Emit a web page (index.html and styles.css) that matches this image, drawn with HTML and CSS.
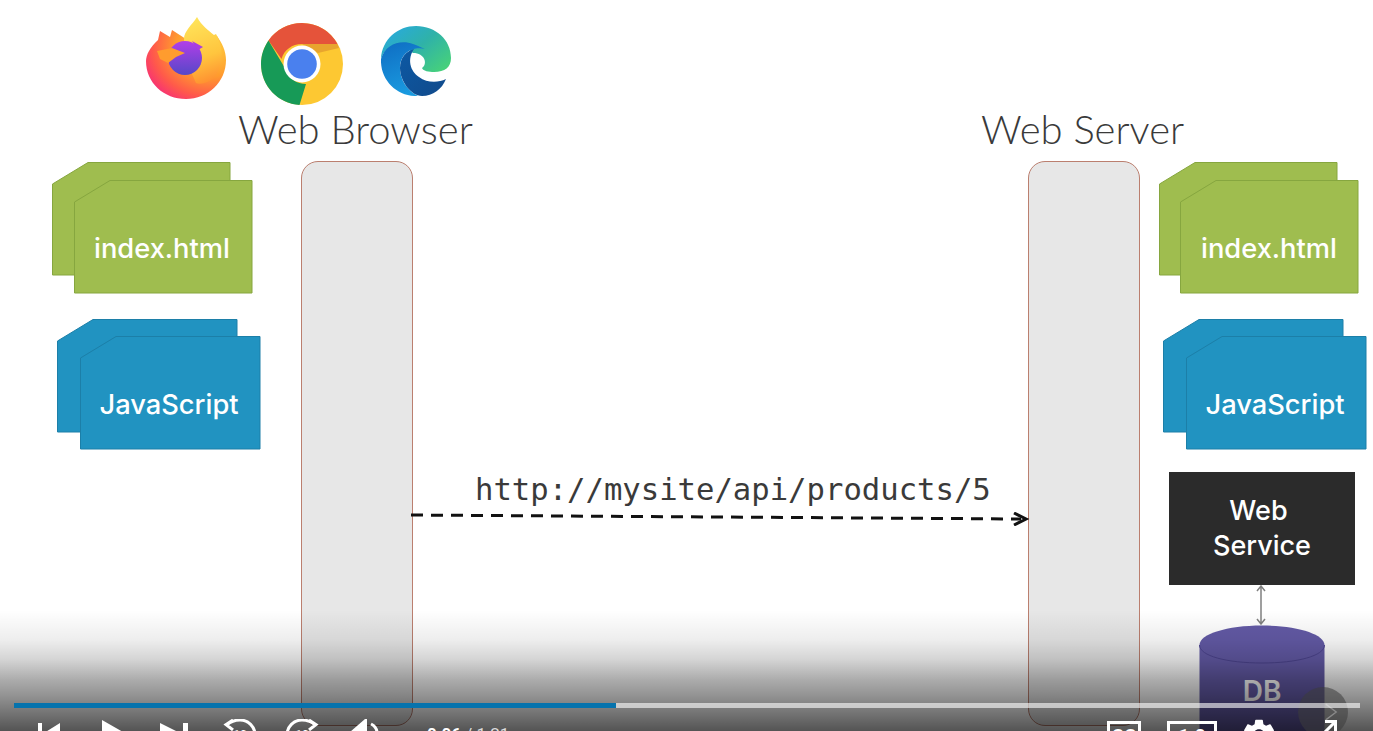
FILE: index.html
```html
<!DOCTYPE html>
<html lang="en">
<head>
    <meta charset="UTF-8">
    <meta name="viewport" content="width=device-width, initial-scale=1.0">
    <title>Web Browser and Web Server</title>
    <link rel="stylesheet" href="styles.css">
</head>
<body>
    <div class="player">
        <div class="slide">
            <!-- browser logos -->
            <svg class="logo logo-firefox" viewBox="0 0 80 82">
                <defs>
                    <radialGradient id="foxBody" cx="0.8" cy="0.25" r="0.95">
                        <stop offset="0" stop-color="#ffd23f"/>
                        <stop offset="0.45" stop-color="#ff9a2e"/>
                        <stop offset="0.75" stop-color="#ff5a4a"/>
                        <stop offset="1" stop-color="#f5277f"/>
                    </radialGradient>
                    <linearGradient id="foxFlame" x1="0.4" y1="0" x2="0.6" y2="1">
                        <stop offset="0" stop-color="#ffe45a"/>
                        <stop offset="0.6" stop-color="#ffc53e"/>
                        <stop offset="1" stop-color="#ff8f30"/>
                    </linearGradient>
                    <linearGradient id="foxGlobe" x1="0.5" y1="0" x2="0.5" y2="1">
                        <stop offset="0" stop-color="#b23ee8"/>
                        <stop offset="1" stop-color="#5648c8"/>
                    </linearGradient>
                </defs>
                <path fill="url(#foxBody)" d="M14 14 L12 23 C4 30 0 38 0 44 C0 66 18 82 40 82 C62 82 80 65 80 43 C80 34 76 26 71 19 L40 22 L26 13 L24 20 Z"/>
                <path fill="url(#foxFlame)" d="M51 0 C56 9 62 13 68 18 L70 17 C77 28 78 46 70 58 C64 66 54 68 50 66 L39 41 L38 22 C38 14 46 8 51 0 Z"/>
                <circle cx="39" cy="41" r="17" fill="url(#foxGlobe)"/>
                <path fill="#a83ee0" d="M46 24 L57 30 L52 33 Z"/>
                <path fill="#ff9c2e" d="M11 34 L26 31 L39 36 L30 40 L22 46 L14 42 Z"/>
            </svg>
            <svg class="logo logo-chrome" viewBox="0 0 82 82">
                <circle cx="41" cy="41" r="41" fill="#fdc832"/>
                <path fill="#e5533a" d="M7.500 17.500 C15 6.500 27 0 41 0 C56 0 70 8.500 76.500 21 L41 21 C31 21 23 27 20.500 36 Z"/>
                <path fill="#179a57" d="M7.500 17.500 L24.500 46 C28 56 36 61 45 61 L38.500 82 C17 80.500 0 63 0 41 C0 32 3 24 7.500 17.500 Z"/>
                <path fill="#e8a52e" d="M41 21 L76.500 21 L78 25 L57 30 Z"/>
                <circle cx="41" cy="41" r="18.500" fill="#fff"/>
                <circle cx="41" cy="41" r="14.800" fill="#4a80ee"/>
            </svg>
            <svg class="logo logo-edge" viewBox="0 0 70 70">
                <defs>
                    <linearGradient id="edgeTop" x1="0" y1="0" x2="1" y2="0.8">
                        <stop offset="0" stop-color="#27a8e8"/>
                        <stop offset="0.55" stop-color="#2fb2a8"/>
                        <stop offset="1" stop-color="#46d07c"/>
                    </linearGradient>
                    <linearGradient id="edgeLeft" x1="0.2" y1="0" x2="0.5" y2="1">
                        <stop offset="0" stop-color="#0f6fc4"/>
                        <stop offset="1" stop-color="#1a9be0"/>
                    </linearGradient>
                    <linearGradient id="edgeWave" x1="0" y1="0" x2="1" y2="1">
                        <stop offset="0" stop-color="#0c59a4"/>
                        <stop offset="1" stop-color="#114a8b"/>
                    </linearGradient>
                </defs>
                <path fill="url(#edgeTop)" d="M0 33 C1 13 17 0 35 0 C55 0 70 14 70 32 C70 41 64 46 53 46 C48 46 42 45 41 42 C47 38 44 27 32 27 C20 16 5 18 0 33 Z"/>
                <path fill="url(#edgeLeft)" d="M0 33 C4 18 20 13 32 18 C40 21 44 23 44 23 C32 20 19 27 19 42 C19 53 26 65 37 70 C16 71 -1 54 0 33 Z"/>
                <path fill="url(#edgeWave)" d="M33 23 C25 25 19 32 19 42 C19 55 30 70 41 70 C52 70 61 63 65 53 C57 57 46 57 38 51 C29 45 26 33 33 23 Z"/>
            </svg>

            <div class="heading heading-browser">Web Browser</div>
            <div class="heading heading-server">Web Server</div>

            <div class="lifeline lifeline-browser"></div>
            <div class="lifeline lifeline-server"></div>

            <!-- file stacks -->
            <div class="file-stack stack-html stack-client-html">
                <svg class="sheets" viewBox="0 0 201 132">
                    <polygon points="0.500,22 36,0.500 178,0.500 178,113 0.500,113"/>
                    <polygon points="22.500,40 58,18.500 200,18.500 200,131 22.500,131"/>
                </svg>
                <div class="sheet-label">index.html</div>
            </div>
            <div class="file-stack stack-js stack-client-js">
                <svg class="sheets" viewBox="0 0 204 131">
                    <polygon points="0.500,22 36,0.500 180,0.500 180,113 0.500,113"/>
                    <polygon points="23.500,39 59,17.500 203,17.500 203,130 23.500,130"/>
                </svg>
                <div class="sheet-label">JavaScript</div>
            </div>
            <div class="file-stack stack-html stack-server-html">
                <svg class="sheets" viewBox="0 0 201 132">
                    <polygon points="0.500,22 36,0.500 178,0.500 178,113 0.500,113"/>
                    <polygon points="21.500,40 57,18.500 199,18.500 199,131 21.500,131"/>
                </svg>
                <div class="sheet-label">index.html</div>
            </div>
            <div class="file-stack stack-js stack-server-js">
                <svg class="sheets" viewBox="0 0 204 131">
                    <polygon points="0.500,22 36,0.500 180,0.500 180,113 0.500,113"/>
                    <polygon points="23.500,39 59,17.500 203,17.500 203,130 23.500,130"/>
                </svg>
                <div class="sheet-label">JavaScript</div>
            </div>

            <div class="url-label">http://mysite/api/products/5</div>
            <svg class="request-arrow" viewBox="0 0 620 14">
                <line x1="0" y1="3" x2="610" y2="7" stroke="#111" stroke-width="3" stroke-dasharray="12 8"/>
                <path d="M603 1 L615 7 L603 13" fill="none" stroke="#111" stroke-width="3"/>
            </svg>

            <div class="web-service"><span class="web-word">Web</span>Service</div>
            <svg class="service-link" viewBox="0 0 12 40">
                <path d="M6 1 V39 M2 6 L6 1 L10 6 M2 34 L6 39 L10 34" fill="none" stroke="#808080" stroke-width="1.500"/>
            </svg>

            <div class="database">
                <svg class="db-shape" viewBox="0 0 126 110">
                    <path d="M0.500 20 C0.500 9 28 0.500 63 0.500 C98 0.500 125.500 9 125.500 20 V110 H0.500 Z" fill="#635aa6"/>
                    <path d="M0.500 20 C0.500 31 28 38 63 38 C98 38 125.500 31 125.500 20" fill="none" stroke="#4d4590" stroke-width="1"/>
                </svg>
                <span class="db-label">DB</span>
            </div>
        </div>

        <!-- video controls, cut off by the bottom of the window -->
        <div class="shade"></div>
        <div class="next-button">
            <svg viewBox="0 0 16 24"><path d="M2 3 L14 12 L2 21" fill="none" stroke="#8a8a8a" stroke-width="1.500"/></svg>
        </div>
        <div class="progress">
            <div class="progress-done"></div>
        </div>
        <div class="controls">
            <div class="controls-left">
                <svg class="ctl ctl-back" viewBox="0 0 22 24"><path d="M0 0 H4 V24 H0 Z M22 0 V20 L6 10 Z" fill="#fff"/></svg>
                <svg class="ctl ctl-play" viewBox="0 0 28 32"><path d="M0 0 L28 16 L0 32 Z" fill="#fff"/></svg>
                <svg class="ctl ctl-next" viewBox="0 0 28 24"><path d="M0 0 L20 10 L0 20 Z M23 0 H28 V24 H23 Z" fill="#fff"/></svg>
                <svg class="ctl ctl-replay" viewBox="0 0 34 34">
                    <path d="M10 1 L3 5.500 L10 11 M4 6 C9 1 14 1 17 1 A15 15 0 0 1 32 16 A15 15 0 0 1 31 21" fill="none" stroke="#fff" stroke-width="3"/>
                    <text class="seek-num" x="17" y="20" text-anchor="middle">10</text>
                </svg>
                <svg class="ctl ctl-forward" viewBox="0 0 34 34">
                    <path d="M24 1 L31 5.500 L24 11 M30 6 C25 1 20 1 17 1 A15 15 0 0 0 2 16 A15 15 0 0 0 3 21" fill="none" stroke="#fff" stroke-width="3"/>
                    <text class="seek-num" x="17" y="20" text-anchor="middle">10</text>
                </svg>
                <svg class="ctl ctl-volume" viewBox="0 0 30 32">
                    <path d="M0 13 L15 0 H17 V32 H0 Z" fill="#fff"/>
                    <path d="M21 5 C25 7 27 10 27 14" fill="none" stroke="#fff" stroke-width="3"/>
                </svg>
                <span class="time"><b>0:06</b> / 1:21</span>
            </div>
            <div class="controls-right">
                <span class="ctl-box ctl-cc">CC</span>
                <span class="ctl-box ctl-speed">1.0</span>
                <svg class="ctl ctl-gear" viewBox="2 2 20 20"><path fill="#fff" d="M19.140 12.940c.04-.3.06-.61.06-.94 0-.32-.02-.64-.07-.94l2.030-1.580a.49.49 0 0 0 .12-.61l-1.920-3.320a.488.488 0 0 0-.59-.22l-2.390.96c-.5-.38-1.030-.7-1.620-.94l-.36-2.540a.484.484 0 0 0-.48-.41h-3.840c-.24 0-.43.17-.47.41l-.36 2.540c-.59.24-1.130.57-1.620.94l-2.390-.96c-.22-.08-.47 0-.59.22L2.740 8.870c-.12.21-.08.47.12.61l2.030 1.580c-.05.3-.09.63-.09.94s.02.64.07.94l-2.030 1.580a.49.49 0 0 0-.12.61l1.920 3.320c.12.22.37.29.59.22l2.390-.96c.5.38 1.030.7 1.620.94l.36 2.540c.05.24.24.41.48.41h3.840c.24 0 .44-.17.47-.41l.36-2.540c.59-.24 1.130-.56 1.620-.94l2.390.96c.22.08.47 0 .59-.22l1.920-3.320c.12-.22.07-.47-.12-.61l-2.010-1.580zM12 15.600c-1.980 0-3.600-1.620-3.600-3.600s1.620-3.600 3.600-3.600 3.600 1.620 3.600 3.600-1.620 3.600-3.600 3.600z"/></svg>
                <svg class="ctl ctl-expand" viewBox="0 0 30 30"><path d="M18 1.500 H28.500 V12 M28.500 1.500 L1 29" fill="none" stroke="#fff" stroke-width="3"/></svg>
            </div>
        </div>
    </div>
</body>
</html>
```

FILE: styles.css
```css
html, body {
    margin: 0;
    padding: 0;
    height: 100%;
    overflow: hidden;
    background-color: #fff;
}
.player {
    position: relative;
    width: 1373px;
    height: 731px;
    overflow: hidden;
    font-family: "Lato", Arial, sans-serif;
}
.slide {
    position: absolute;
    inset: 0;
    background-color: #fff;
}

/* logos */
.logo {
    position: absolute;
}
.logo-firefox {
    left: 146px;
    top: 17px;
    width: 80px;
    height: 82px;
}
.logo-chrome {
    left: 261px;
    top: 23px;
    width: 82px;
    height: 82px;
}
.logo-edge {
    left: 381px;
    top: 26px;
    width: 70px;
    height: 70px;
}

.heading {
    position: absolute;
    top: 104px;
    font-size: 40px;
    font-weight: 300;
    line-height: 50px;
    color: #3a3a3a;
    white-space: nowrap;
}
.heading-browser { left: 238px; }
.heading-server { left: 981px; }

.lifeline {
    position: absolute;
    top: 161px;
    width: 112px;
    height: 565px;
    box-sizing: border-box;
    background-color: #e7e7e7;
    border: 1px solid #bb7f6f;
    border-radius: 17px;
}
.lifeline-browser { left: 301px; }
.lifeline-server { left: 1028px; }

/* file stacks */
.file-stack {
    position: absolute;
}
.sheets {
    display: block;
}
.stack-html .sheets {
    width: 201px;
    height: 132px;
}
.stack-js .sheets {
    width: 204px;
    height: 131px;
}
.stack-html polygon {
    fill: #9fbd4f;
    stroke: #86a63f;
    stroke-width: 1;
}
.stack-js polygon {
    fill: #2193c1;
    stroke: #1c7fa8;
    stroke-width: 1;
}
.sheet-label {
    position: absolute;
    right: 0;
    bottom: 0;
    display: flex;
    align-items: center;
    justify-content: center;
    box-sizing: border-box;
    padding-top: 21px;
    padding-right: 4px;
    height: 113px;
    color: #fff;
    font-family: "Inter", Arial, sans-serif;
    font-weight: 500;
    font-size: 27.300px;
}
.stack-html .sheet-label { width: 178px; }
.stack-js .sheet-label { width: 180px; }
.stack-client-html { left: 52px; top: 162px; }
.stack-client-js { left: 57px; top: 319px; }
.stack-server-html { left: 1159px; top: 162px; }
.stack-server-js { left: 1163px; top: 319px; }

/* request */
.url-label {
    position: absolute;
    left: 475px;
    top: 471px;
    font-family: "DejaVu Sans Mono", "Liberation Mono", monospace;
    font-size: 30.600px;
    line-height: 38px;
    color: #3a3a3a;
    white-space: nowrap;
}
.request-arrow {
    position: absolute;
    left: 411px;
    top: 512px;
    width: 620px;
    height: 14px;
}

.web-service {
    position: absolute;
    left: 1169px;
    top: 472px;
    width: 186px;
    height: 113px;
    padding-top: 21px;
    box-sizing: border-box;
    background-color: #2b2b2b;
    color: #fff;
    font-family: "Inter", Arial, sans-serif;
    font-weight: 500;
    font-size: 27px;
    line-height: 35px;
    text-align: center;
}
.web-word {
    display: block;
    padding-right: 7px;
}
.service-link {
    position: absolute;
    left: 1255px;
    top: 585px;
    width: 12px;
    height: 40px;
}
.database {
    position: absolute;
    left: 1199px;
    top: 625px;
    width: 126px;
    height: 110px;
}
.db-shape {
    display: block;
    width: 126px;
    height: 110px;
}
.db-label {
    position: absolute;
    left: 0;
    right: 0;
    top: 50px;
    text-align: center;
    font-family: "Inter", Arial, sans-serif;
    font-weight: 600;
    font-size: 28px;
    line-height: 32px;
    color: #fff;
}

/* player chrome */
.shade {
    position: absolute;
    left: 0;
    right: 0;
    top: 610px;
    height: 121px;
    background: linear-gradient(to bottom,
        rgba(0,0,0,0) 0%,
        rgba(0,0,0,0.07) 25%,
        rgba(0,0,0,0.17) 41%,
        rgba(0,0,0,0.33) 58%,
        rgba(0,0,0,0.42) 70%,
        rgba(0,0,0,0.56) 87%,
        rgba(0,0,0,0.67) 100%);
}
.progress {
    position: absolute;
    left: 14px;
    top: 703px;
    width: 1346px;
    height: 5px;
    background-color: rgba(255,255,255,0.6);
}
.progress-done {
    width: 602px;
    height: 100%;
    background-color: #0673ad;
}
.next-button {
    position: absolute;
    left: 1298px;
    top: 687px;
    width: 50px;
    height: 50px;
    box-sizing: border-box;
    padding-left: 16px;
    display: flex;
    align-items: center;
    justify-content: center;
    border-radius: 50%;
    background-color: rgba(60,60,60,0.55);
}
.next-button svg {
    width: 14px;
    height: 22px;
}
.controls {
    position: absolute;
    left: 38px;
    right: 36px;
    top: 719px;
    display: flex;
    justify-content: space-between;
    align-items: flex-start;
}
.controls-left, .controls-right {
    display: flex;
    align-items: flex-start;
}
.controls-right { gap: 26px; }
.ctl {
    flex: none;
    display: block;
}
.ctl-back { width: 22px; height: 24px; margin-top: 4px; }
.ctl-play { width: 28px; height: 32px; margin-top: 1px; margin-left: 42px; }
.ctl-next { width: 28px; height: 24px; margin-top: 4px; margin-left: 30px; }
.ctl-replay { width: 34px; height: 34px; margin-left: 35px; }
.ctl-forward { width: 34px; height: 34px; margin-left: 28px; }
.ctl-volume { width: 30px; height: 32px; margin-left: 31px; }
.seek-num {
    font-family: "Roboto", Arial, sans-serif;
    font-size: 12px;
    font-weight: 700;
    fill: #fff;
}
.time {
    margin-left: 47px;
    margin-top: 5px;
    font-family: "Roboto", Arial, sans-serif;
    font-size: 17px;
    color: #ddd;
    white-space: nowrap;
}
.time b { color: #fff; }
.ctl-box {
    display: block;
    box-sizing: border-box;
    height: 30px;
    margin-top: 2px;
    padding-top: 1px;
    border: 3px solid #fff;
    color: #fff;
    font-family: "Roboto", Arial, sans-serif;
    font-size: 19px;
    font-weight: 700;
    line-height: 22px;
    text-align: center;
}
.ctl-cc { width: 34px; }
.ctl-speed { width: 50px; }
.ctl-gear { width: 32px; height: 32px; }
.ctl-expand { width: 30px; height: 30px; margin-left: 6px; margin-top: 1px; }
```
